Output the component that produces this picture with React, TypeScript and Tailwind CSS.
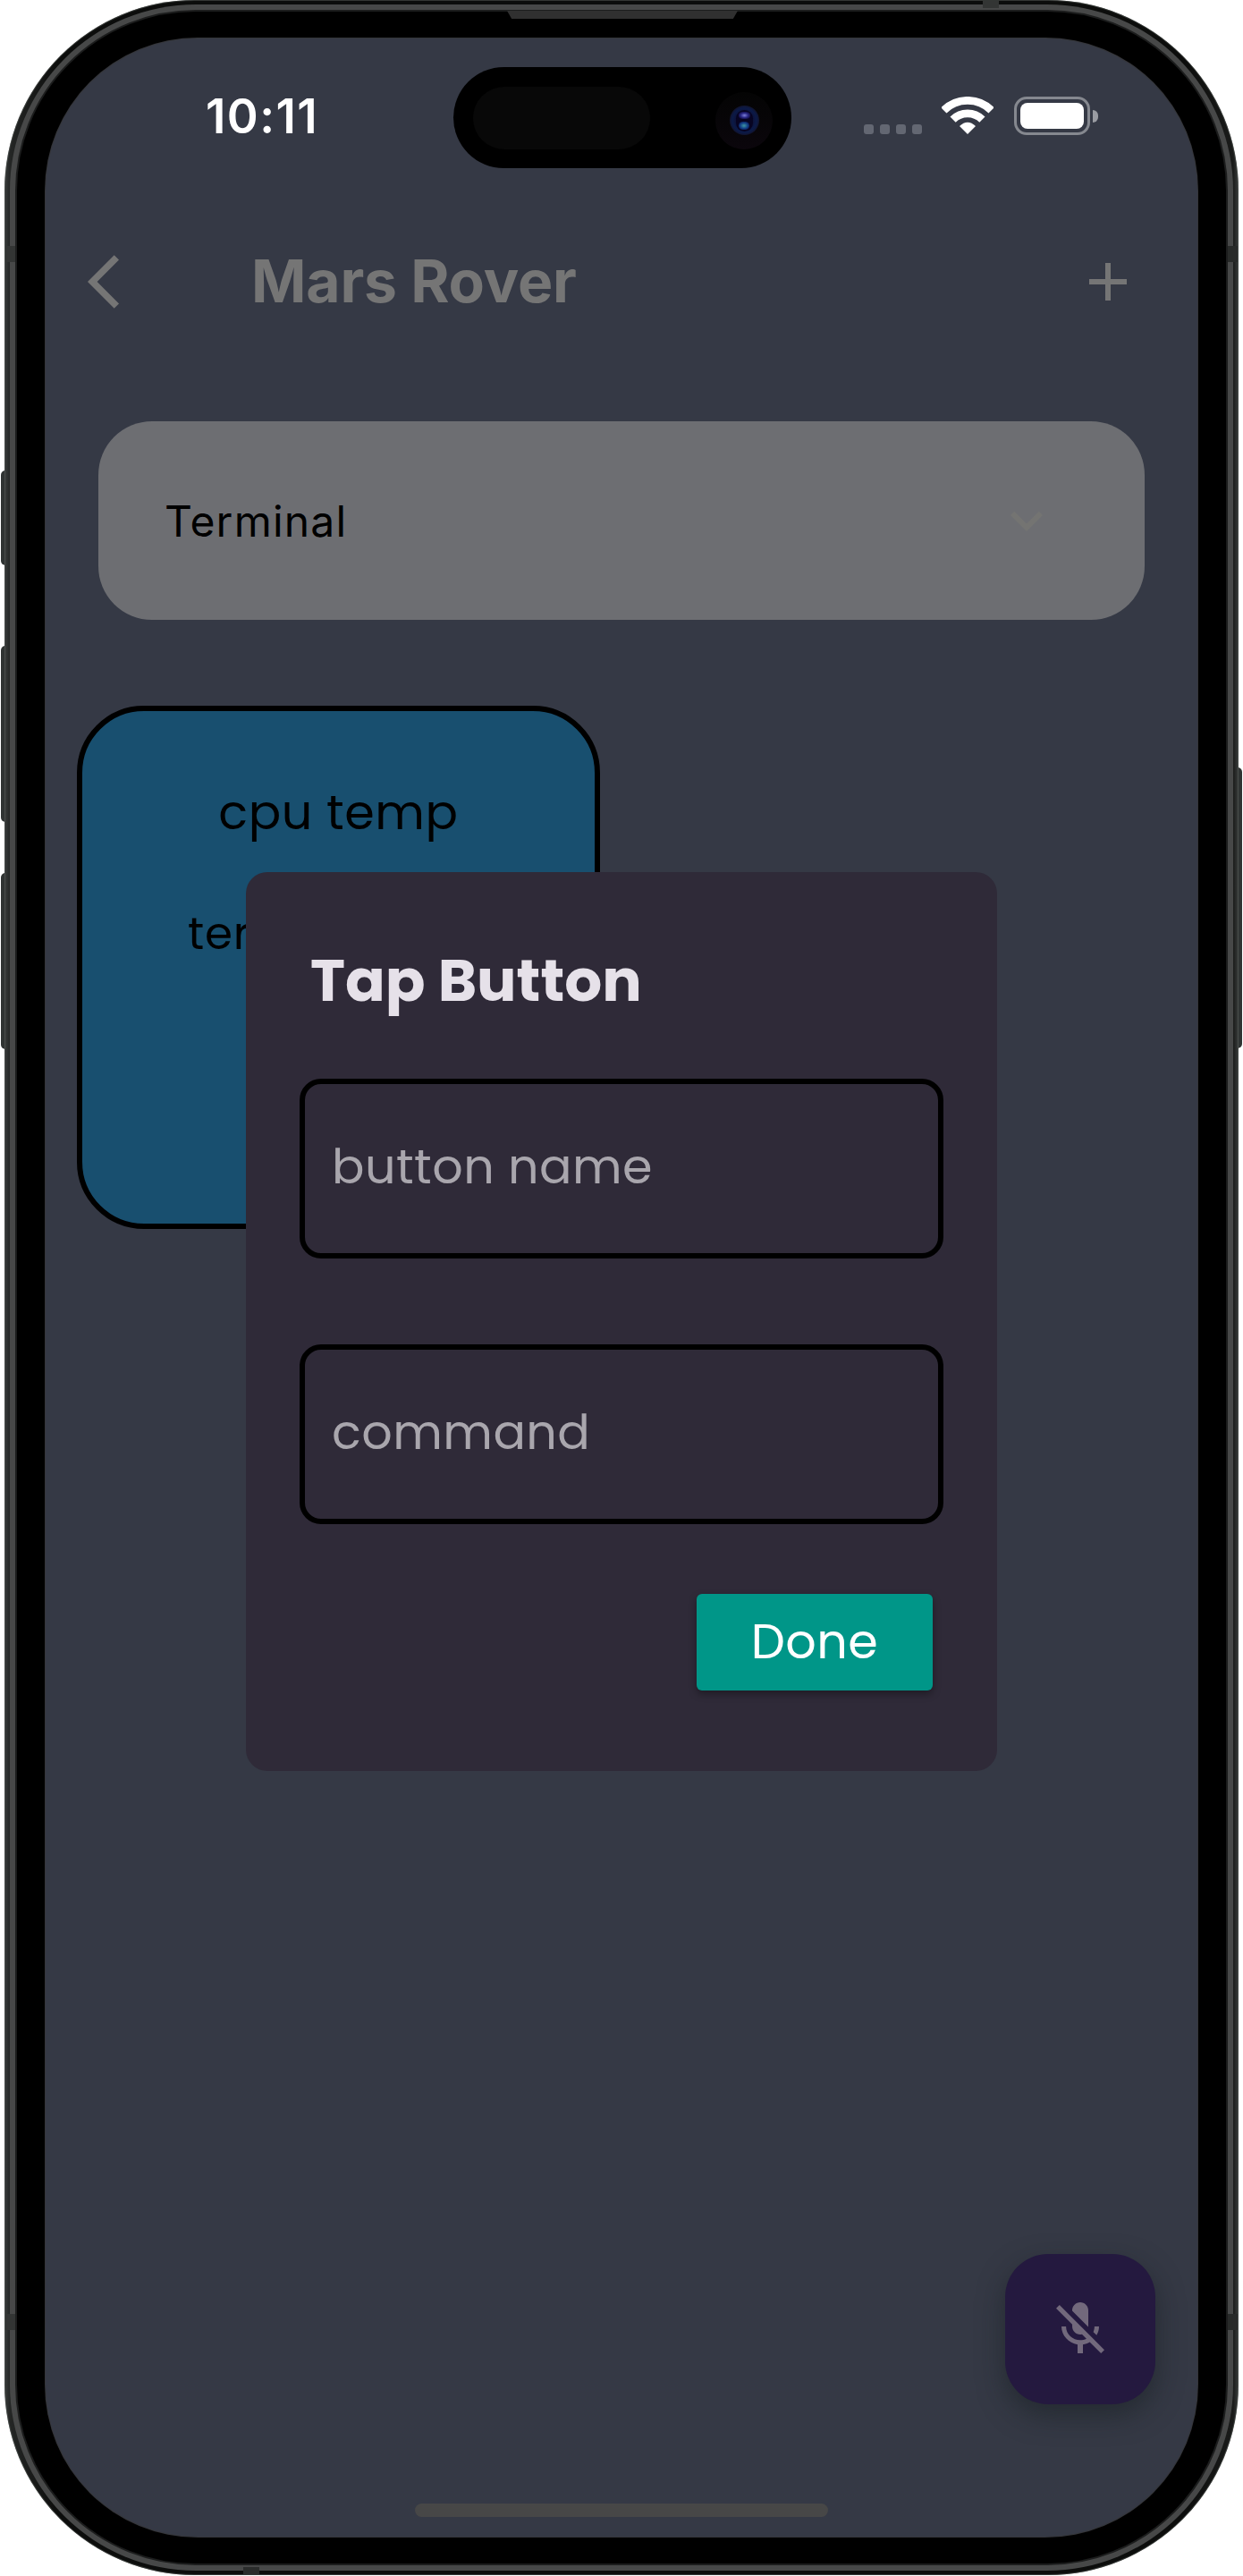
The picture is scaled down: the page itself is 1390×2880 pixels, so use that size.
function BackIcon() {
  return (
    <svg viewBox="0 0 24 24" className="size-[72px]" fill="currentColor">
      <path d="M11.67 3.87 9.9 2.1 0 12l9.9 9.9 1.77-1.77L3.54 12z" />
    </svg>
  );
}

function PlusIcon() {
  return (
    <svg viewBox="0 0 24 24" className="size-[72px]" fill="currentColor">
      <path d="M19 13h-6v6h-2v-6H5v-2h6V5h2v6h6z" />
    </svg>
  );
}

function ChevronDownIcon() {
  return (
    <svg viewBox="0 0 24 24" className="size-[72px] text-[#747472]" fill="currentColor">
      <path d="M7.41 8.59 12 13.17l4.59-4.58L18 10l-6 6-6-6z" />
    </svg>
  );
}

function MicOffIcon() {
  return (
    <svg viewBox="0 0 24 24" className="size-[72px]" fill="currentColor">
      <path d="M19 11h-1.7c0 .74-.16 1.43-.43 2.05l1.23 1.23c.56-.98.9-2.09.9-3.28zm-4.02.17c0-.06.02-.11.02-.17V5c0-1.66-1.34-3-3-3S9 3.34 9 5v.18l5.98 5.99zM4.27 3L3 4.27l6.01 6.01V11c0 1.66 1.33 3 2.99 3 .22 0 .44-.03.65-.08l1.66 1.66c-.71.33-1.5.52-2.31.52-2.76 0-5.3-2.1-5.3-5.1H5c0 3.41 2.72 6.23 6 6.72V21h2v-3.28c.91-.13 1.77-.45 2.54-.9L19.73 21 21 19.73 4.27 3z" />
    </svg>
  );
}

function WifiIcon() {
  return (
    <svg viewBox="0 0 58 42" className="h-[42px] w-[58px]" fill="none" stroke="#fff" strokeWidth="8.8">
      <path d="M2.4 15.4A37.6 37.6 0 0 1 55.6 15.4" />
      <path d="M12.6 25.6A23.2 23.2 0 0 1 45.4 25.6" />
      <path d="M29 42 20 33Q29 24.4 38 33Z" fill="#fff" stroke="none" />
    </svg>
  );
}

function StatusBar() {
  return (
    <div className="flex h-[173px] shrink-0 items-center justify-between pr-[111px] pl-[179px]">
      <span className="pt-[2px] font-[Inter,sans-serif] text-[53px] leading-none font-semibold tracking-[1.4px] text-white">
        10:11
      </span>
      <div className="flex h-[43px] items-end">
        <div className="mb-px flex gap-[7px]">
          <i className="size-[11px] rounded-[3px] bg-[#636772]" />
          <i className="size-[11px] rounded-[3px] bg-[#636772]" />
          <i className="size-[11px] rounded-[3px] bg-[#636772]" />
          <i className="size-[11px] rounded-[3px] bg-[#636772]" />
        </div>
        <div className="mb-px ml-[22px]">
          <WifiIcon />
        </div>
        <div className="ml-[23px] flex items-center">
          <div className="h-[43px] w-[85px] rounded-[14px] border-[3px] border-[#85888f] p-[4px]">
            <div className="size-full rounded-[8px] bg-white" />
          </div>
          <div className="ml-[3px] h-[14px] w-[6px] rounded-r-full bg-[#9a9ca2]" />
        </div>
      </div>
    </div>
  );
}

function DynamicIsland() {
  return (
    <div className="absolute top-[32px] left-[456px] flex h-[113px] w-[378px] items-center rounded-full bg-black pr-[21px] pl-[22px]">
      <div className="h-[70px] w-[198px] rounded-full bg-[#080808]" />
      <div className="mt-[6px] ml-auto flex size-[64px] items-center justify-center rounded-full bg-linear-to-b from-[#040404] to-[#0b060c]">
        <div className="flex size-[33px] items-center justify-center rounded-full bg-[radial-gradient(circle,#0d1238_40%,#0b1a48_58%,#12132b_72%)]">
          <div className="flex h-[24px] w-[19px] flex-col items-center justify-between rounded-full bg-[#070422] py-[2px]">
            <i className="h-[8px] w-[13px] rounded-full bg-[radial-gradient(ellipse,#7476d0_5%,#2a2885_45%,#0a0630_85%)]" />
            <i className="h-[9px] w-[12px] rounded-full bg-[radial-gradient(ellipse,#38889e_8%,#123f86_50%,#0a0a45_90%)]" />
          </div>
        </div>
      </div>
    </div>
  );
}

function AppBar() {
  return (
    <header className="flex h-[198px] shrink-0 items-center pr-[64px] pl-[47px] text-[#757575]">
      <BackIcon />
      <h1 className="ml-[111px] pb-[2px] font-[Inter,sans-serif] text-[66px] leading-none font-bold tracking-[-0.2px]">
        Mars Rover
      </h1>
      <div className="ml-auto">
        <PlusIcon />
      </div>
    </header>
  );
}

function Field({ label }: { label: string }) {
  return (
    <div className="flex h-[201px] items-center rounded-[24px] border-[6px] border-black pb-[5px] pl-[30px] text-[54px] leading-none tracking-[0.45px] text-[#a9a6ad]">
      {label}
    </div>
  );
}

function TapButtonDialog() {
  return (
    <div className="absolute inset-0 flex items-center justify-center pt-[76px]">
      <section className="flex h-[1005px] w-[840px] flex-col rounded-[24px] bg-[#2f2a38] px-[60px] pt-[72px] font-[Poppins,Inter,sans-serif]">
        <h2 className="pl-[12px] text-[66px] leading-[99px] font-bold text-[#e6e1e9]">Tap Button</h2>
        <div className="mt-[60px] flex flex-col gap-[96px]">
          <Field label="button name" />
          <Field label="command" />
        </div>
        <button className="mt-[78px] mr-[12px] flex h-[108px] w-[264px] items-center justify-center self-end rounded-[6px] bg-[#009688] pb-[3px] text-[54px] leading-none tracking-[0.4px] text-white shadow-[0_4px_8px_rgba(0,0,0,0.35)]">
          Done
        </button>
      </section>
    </div>
  );
}

export default function App() {
  return (
    <div className="relative h-[2880px] w-[1390px] overflow-hidden bg-white pl-[5px]">
      {/* Side buttons */}
      <i className="absolute top-[526px] left-[1px] h-[106px] w-[8px] rounded-l-[5px] bg-[#303433]" />
      <i className="absolute top-[722px] left-[1px] h-[197px] w-[8px] rounded-l-[5px] bg-[#303433]" />
      <i className="absolute top-[976px] left-[1px] h-[197px] w-[8px] rounded-l-[5px] bg-[#303433]" />
      <i className="absolute top-[858px] left-[1381px] h-[314px] w-[8px] rounded-r-[5px] bg-[#303433]" />

      {/* Metal rim, bezel and screen */}
      <div className="relative h-[2879px] w-[1380px] rounded-[213px] bg-[linear-gradient(90deg,#3a3d3c_0px,#242625_6px,#0c0d0c_60px,#0c0d0c_1320px,#1a1b1a_1374px,#3a3d3c_1380px)] px-[6px] py-[5px] shadow-[inset_0_0_0_1px_rgba(90,95,92,0.5)]">
        <div className="size-full rounded-[208px] bg-[#474848] p-[6px]">
          <div className="relative size-full rounded-[202px] border-2 border-[#1c1d1d] bg-black px-[32px] py-[30px]">
            <i className="absolute -top-[1px] left-[548px] h-[9px] w-[258px] bg-[#303030] [clip-path:polygon(0_0,100%_0,98%_100%,2%_100%)]" />
            <div className="relative flex size-full flex-col overflow-hidden rounded-[170px] bg-[#353945] shadow-[0_0_0_1px_#35363a]">
              <StatusBar />
              <AppBar />
              <div className="mx-[59px] mt-[57px] flex h-[222px] shrink-0 items-center justify-between rounded-[60px] bg-[#6d6e72] pr-[96px] pl-[74px]">
                <span className="pt-[2px] font-[Inter,sans-serif] text-[48px] leading-none tracking-[1.2px] text-black">
                  Terminal
                </span>
                <ChevronDownIcon />
              </div>
              <div className="mt-[96px] ml-[35px] size-[585px] shrink-0 rounded-[75px] border-[6px] border-black bg-[#184f6f] pt-[73px] font-[Poppins,Inter,sans-serif] text-black">
                <p className="text-center text-[54px] leading-[81px] tracking-[0.6px]">cpu temp</p>
                <p className="mt-[59px] pl-[118px] text-[50px] leading-[72px] tracking-[0.75px]">ter</p>
              </div>
              <button className="absolute right-[47px] bottom-[148px] flex size-[168px] items-center justify-center rounded-[48px] bg-[#24193f] text-[#72697c] shadow-[0_12px_30px_rgba(20,28,30,0.5)]">
                <MicOffIcon />
              </button>
              <i className="absolute bottom-[22px] left-[413px] h-[15px] w-[462px] rounded-full bg-[#474747]" />
              <TapButtonDialog />
              <DynamicIsland />
            </div>
          </div>
        </div>

        {/* Antenna bands */}
        <i className="absolute top-[275px] left-px h-[18px] w-[11px] bg-[#333534]" />
        <i className="absolute top-[275px] right-px h-[18px] w-[11px] bg-[#282a29]" />
        <i className="absolute top-[2587px] left-px h-[18px] w-[11px] bg-[#333534]" />
        <i className="absolute right-px top-[2587px] h-[18px] w-[11px] bg-[#282a29]" />
        <i className="absolute top-px left-[1094px] h-[8px] w-[18px] bg-[#333534]" />
        <i className="absolute bottom-px left-[267px] h-[8px] w-[18px] bg-[#2a2c2b]" />
      </div>
    </div>
  );
}
